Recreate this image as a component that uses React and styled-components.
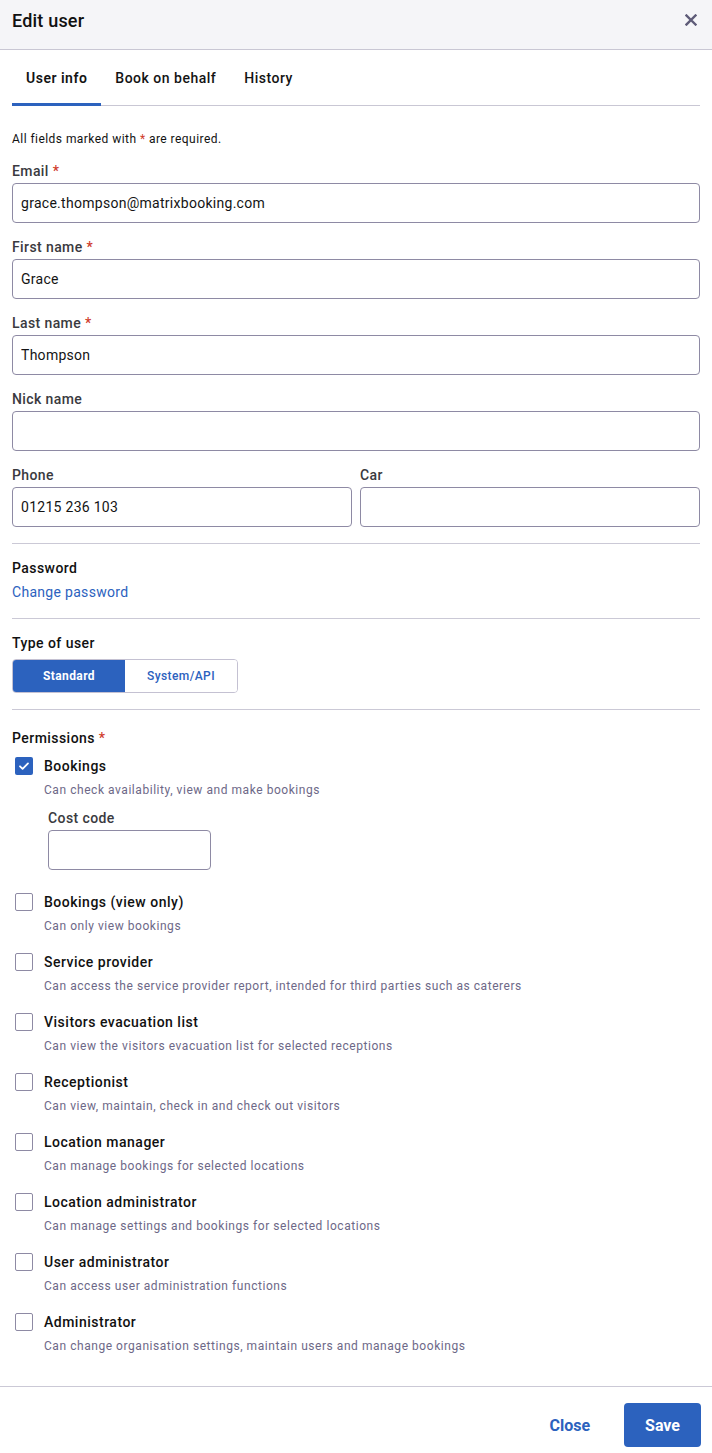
import React from 'react';
import styled, { createGlobalStyle } from 'styled-components';

const BLUE = '#2c62be';

const GlobalStyle = createGlobalStyle`
  body {
    margin: 0;
    background: #fff;
    font-family: Roboto, "Noto Sans", Arial, sans-serif;
    color: #1b1b1f;
  }
  * { box-sizing: border-box; }
`;

const Dialog = styled.div`
  width: 712px;
  min-height: 1453px;
  background: #fff;
  display: flex;
  flex-direction: column;
`;

const Header = styled.div`
  height: 50px;
  background: #f5f5f8;
  border-bottom: 1px solid #c9c7d4;
  display: flex;
  align-items: center;
  justify-content: space-between;
  padding: 0 12px 9px;
`;

const Title = styled.h1`
  margin: 0;
  font-size: 18px;
  font-weight: 500;
  letter-spacing: 0.2px;
  color: #111;
`;

const CloseIcon = styled.button`
  border: none;
  background: none;
  padding: 0;
  width: 18px;
  height: 18px;
  display: flex;
  align-items: center;
  justify-content: center;
  cursor: pointer;
`;

const Body = styled.div`
  padding: 0 12px;
  flex: 1;
`;

const Tabs = styled.div`
  display: flex;
  border-bottom: 1px solid #c9c7d4;
`;

const Tab = styled.div`
  height: 56px;
  padding: 3px 14px 0;
  display: flex;
  align-items: center;
  font-size: 14px;
  font-weight: ${p => (p.$active ? 600 : 500)};
  color: #141414;
  letter-spacing: 0.5px;
  border-bottom: 3px solid ${p => (p.$active ? BLUE : 'transparent')};
  margin-bottom: -1px;
`;

const Note = styled.p`
  margin: 25px 0 0;
  font-size: 12px;
  line-height: 16px;
  color: #111;
  letter-spacing: 0.45px;
`;

const Star = styled.span`
  color: #cf3b2b;
`;

const Fields = styled.div`
  display: grid;
  gap: 14px;
  margin-top: 14px;
  padding-bottom: 16px;
`;

const Row = styled.div`
  display: grid;
  grid-template-columns: 1fr 1fr;
  gap: 8px;
`;

const Field = styled.div`
  display: flex;
  flex-direction: column;
  width: ${p => p.$width || 'auto'};
`;

const Label = styled.label`
  font-size: 14px;
  line-height: 20px;
  font-weight: 500;
  color: #3a3a40;
  letter-spacing: 0.4px;
  margin-bottom: 2px;
`;

const Input = styled.input`
  height: 40px;
  width: 100%;
  border: 1px solid #8e8aa4;
  border-radius: 4px;
  padding: 0 8px;
  font-family: inherit;
  font-size: 14px;
  letter-spacing: 0.28px;
  color: #141414;
  background: #fff;
  outline: none;
`;

const Section = styled.div`
  border-top: 1px solid #cbc9d6;
  padding: ${p => p.$top || 14}px 0 16px;
`;

const SectionTitle = styled.div`
  font-size: 14px;
  line-height: 20px;
  font-weight: 500;
  color: #111;
  letter-spacing: 0.45px;
`;

const Link = styled.a`
  display: block;
  margin-top: 4px;
  font-size: 14px;
  line-height: 20px;
  color: ${BLUE};
  letter-spacing: 0.3px;
  text-decoration: none;
`;

const Segmented = styled.div`
  display: inline-flex;
  margin-top: 6px;
  height: 34px;
  border: 1px solid #c4c1d2;
  border-radius: 4px;
  overflow: hidden;
`;

const Segment = styled.button`
  width: ${p => p.$w}px;
  border: none;
  font-family: inherit;
  font-size: 12px;
  font-weight: ${p => (p.$active ? 700 : 500)};
  letter-spacing: 0.4px;
  background: ${p => (p.$active ? BLUE : '#fff')};
  color: ${p => (p.$active ? '#fff' : BLUE)};
`;

const PermList = styled.div`
  display: flex;
  flex-direction: column;
  gap: 18px;
  margin-top: 8px;
  padding-bottom: 16px;
`;

const Perm = styled.div`
  display: grid;
  grid-template-columns: 18px 1fr;
  column-gap: 11px;
  padding-left: 3px;
`;

const Box = styled.span`
  width: 18px;
  height: 18px;
  margin-top: 1px;
  border-radius: 2px;
  border: ${p => (p.$checked ? 'none' : '1px solid #8e8aa4')};
  background: ${p => (p.$checked ? BLUE : '#fff')};
  display: flex;
  align-items: center;
  justify-content: center;
`;

const PermName = styled.div`
  font-size: 14px;
  line-height: 20px;
  font-weight: 500;
  color: #111;
  letter-spacing: 0.5px;
`;

const PermDesc = styled.div`
  grid-column: 2;
  margin-top: 6px;
  font-size: 12px;
  line-height: 16px;
  color: #6d6887;
  letter-spacing: 0.55px;
`;

const Extra = styled.div`
  grid-column: 2;
  margin: 10px 0 4px 4px;
`;

const Footer = styled.div`
  border-top: 1px solid #cbc9d6;
  display: flex;
  justify-content: flex-end;
  align-items: center;
  gap: 16px;
  padding: 16px 11px 7px;
`;

const Button = styled.button`
  height: 44px;
  padding: 0 ${p => (p.$primary ? 21 : 18)}px;
  border: none;
  border-radius: 4px;
  font-family: inherit;
  font-size: 16px;
  font-weight: 700;
  background: ${p => (p.$primary ? BLUE : 'transparent')};
  color: ${p => (p.$primary ? '#fff' : BLUE)};
  cursor: pointer;
`;

const permissions = [
  { name: 'Bookings', desc: 'Can check availability, view and make bookings', checked: true, costCode: true },
  { name: 'Bookings (view only)', desc: 'Can only view bookings' },
  { name: 'Service provider', desc: 'Can access the service provider report, intended for third parties such as caterers' },
  { name: 'Visitors evacuation list', desc: 'Can view the visitors evacuation list for selected receptions' },
  { name: 'Receptionist', desc: 'Can view, maintain, check in and check out visitors' },
  { name: 'Location manager', desc: 'Can manage bookings for selected locations' },
  { name: 'Location administrator', desc: 'Can manage settings and bookings for selected locations' },
  { name: 'User administrator', desc: 'Can access user administration functions' },
  { name: 'Administrator', desc: 'Can change organisation settings, maintain users and manage bookings' },
];

const Check = () => (
  <svg width="12" height="12" viewBox="0 0 12 12" fill="none">
    <path d="M2 6.3l2.6 2.6L10 3.4" stroke="#fff" strokeWidth="1.8" strokeLinecap="round" strokeLinejoin="round" />
  </svg>
);

const TextField = ({ label, required, value = '', width }) => (
  <Field $width={width}>
    <Label>
      {label}
      {required && <Star> *</Star>}
    </Label>
    <Input readOnly value={value} />
  </Field>
);

const App = () => {
  return (
    <Dialog>
      <GlobalStyle />
      <Header>
        <Title>Edit user</Title>
        <CloseIcon aria-label="Close">
          <svg width="12" height="12" viewBox="0 0 12 12">
            <path d="M1.5 1.5l9 9M10.5 1.5l-9 9" stroke="#5e5b78" strokeWidth="2.4" strokeLinecap="square" />
          </svg>
        </CloseIcon>
      </Header>
      <Body>
        <Tabs>
          <Tab $active>User info</Tab>
          <Tab>Book on behalf</Tab>
          <Tab>History</Tab>
        </Tabs>
        <Note>
          All fields marked with <Star>*</Star> are required.
        </Note>
        <Fields>
          <TextField label="Email" required value="grace.thompson@matrixbooking.com" />
          <TextField label="First name" required value="Grace" />
          <TextField label="Last name" required value="Thompson" />
          <TextField label="Nick name" />
          <Row>
            <TextField label="Phone" value="01215 236 103" />
            <TextField label="Car" />
          </Row>
        </Fields>
        <Section>
          <SectionTitle>Password</SectionTitle>
          <Link href="#">Change password</Link>
        </Section>
        <Section>
          <SectionTitle>Type of user</SectionTitle>
          <Segmented>
            <Segment $active $w={112}>Standard</Segment>
            <Segment $w={112}>System/API</Segment>
          </Segmented>
        </Section>
        <Section $top={18}>
          <SectionTitle>
            Permissions <Star>*</Star>
          </SectionTitle>
          <PermList>
            {permissions.map(p => (
              <Perm key={p.name}>
                <Box $checked={p.checked}>{p.checked && <Check />}</Box>
                <PermName>{p.name}</PermName>
                <PermDesc>{p.desc}</PermDesc>
                {p.costCode && (
                  <Extra>
                    <TextField label="Cost code" width="163px" />
                  </Extra>
                )}
              </Perm>
            ))}
          </PermList>
        </Section>
      </Body>
      <Footer>
        <Button>Close</Button>
        <Button $primary>Save</Button>
      </Footer>
    </Dialog>
  );
};

export default App;
